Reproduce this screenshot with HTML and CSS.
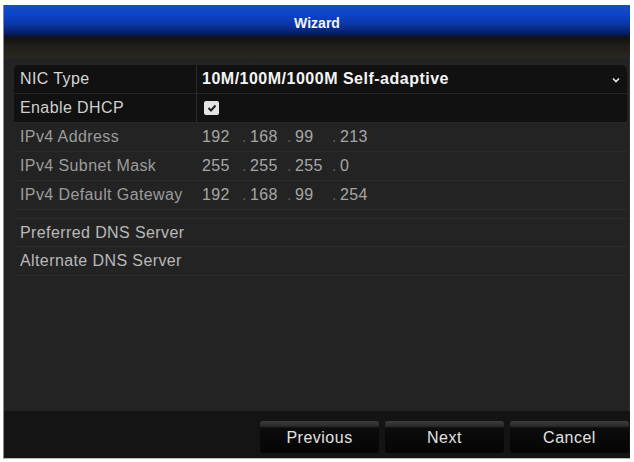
FILE: index.html
```html
<!DOCTYPE html>
<html lang="en">
<head>
  <meta charset="UTF-8"/>
  <title>Wizard</title>
  <link rel="stylesheet" href="styles.css">
</head>
<body>
  <div class="wizard">
    <div class="title">Wizard</div>
    <div class="band"></div>

    <div class="content">
      <div class="row row-select">
        <div class="label">NIC Type</div>
        <div class="value nic">10M/100M/1000M Self-adaptive</div>
        <svg class="arrow" width="8" height="6" viewBox="0 0 8 6">
          <path d="M1 1.5 L4 4.5 L7 1.5" fill="none" stroke="#e8e8e8" stroke-width="1.6"/>
        </svg>
      </div>
      <div class="row row-dark">
        <div class="label bright">Enable DHCP</div>
        <div class="value">
          <span class="check">
            <svg width="10" height="10" viewBox="0 0 10 10">
              <path d="M1.5 5 L4 7.5 L8.5 2.5" fill="none" stroke="#222" stroke-width="2"/>
            </svg>
          </span>
        </div>
      </div>
      <div class="row">
        <div class="label dim">IPv4 Address</div>
        <div class="value ip">
          <span class="oct">192</span><span class="oct"><i>.</i>168</span><span class="oct"><i>.</i>99</span><span class="oct"><i>.</i>213</span>
        </div>
      </div>
      <div class="row">
        <div class="label dim">IPv4 Subnet Mask</div>
        <div class="value ip">
          <span class="oct">255</span><span class="oct"><i>.</i>255</span><span class="oct"><i>.</i>255</span><span class="oct"><i>.</i>0</span>
        </div>
      </div>
      <div class="row">
        <div class="label dim">IPv4 Default Gateway</div>
        <div class="value ip">
          <span class="oct">192</span><span class="oct"><i>.</i>168</span><span class="oct"><i>.</i>99</span><span class="oct"><i>.</i>254</span>
        </div>
      </div>

      <div class="row dns first">
        <div class="label">Preferred DNS Server</div>
        <div class="value"></div>
      </div>
      <div class="row dns">
        <div class="label">Alternate DNS Server</div>
        <div class="value"></div>
      </div>
    </div>

    <div class="footer">
      <button class="btn">Previous</button>
      <button class="btn">Next</button>
      <button class="btn">Cancel</button>
    </div>
  </div>
</body>
</html>
```

FILE: styles.css
```css
html, body {
  margin: 0; padding: 0;
  background: #fff;
  font-family: "Liberation Sans", Arial, sans-serif;
}
.wizard {
  margin: 5px 4px 0 3px;
  height: 454px;
  display: flex; flex-direction: column;
  background: #1a1a1a;
  border-left: 1px solid #8a8a8a;
  border-bottom: 1px solid #b8b8b8;
  box-sizing: border-box;
}
.title {
  flex: 0 0 32px;
  display: flex; align-items: center; justify-content: center;
  background: linear-gradient(#1a4cb8 0%, #0b44cc 30%, #0a37a8 60%, #061c62 90%, #05123a 100%);
  color: #f2f4f8;
  font-size: 14px; font-weight: bold;
  padding-top: 4px; box-sizing: border-box;
}
.band {
  flex: 0 0 21px;
  background: linear-gradient(#121110, #221f1b 50%, #2b2722);
}
.content {
  flex: 1 1 auto;
  background: #232323;
  padding: 7px 2px 0 10px;
  border-right: 1px solid #303030;
}
.row {
  height: 29px;
  display: flex; align-items: center;
  border-bottom: 1px solid #2c2c2c;
  box-sizing: border-box;
  font-size: 16px; letter-spacing: 0.4px;
  position: relative;
}
.row-select, .row-dark {
  background: #111;
  border-bottom: 1px solid #262626;
}
.row-select {
  border-radius: 5px 6px 0 0;
}
.row .label {
  width: 183px; height: 100%;
  padding-left: 6px;
  box-sizing: border-box;
  display: flex; align-items: center;
  color: #d6d6d6;
  border-right: 1px solid #2a2a2a;
  white-space: nowrap;
}
.row .label.bright { color: #cfcfcf; }
.row .label.dim { color: #9c9c9c; border-right: none; }
.row .value {
  flex: 1;
  padding-left: 5px;
  display: flex; align-items: center;
}
.row .value.nic {
  color: #f4f4f4; font-weight: bold; letter-spacing: 0.5px;
}
.arrow {
  position: absolute; right: 7px; top: 12px;
}
.check {
  width: 15px; height: 14px;
  margin-left: 2px;
  background: #e4e4e4; border-radius: 2px;
  display: flex; align-items: center; justify-content: center;
}
.ip { color: #a6a6a6; padding-left: 0 !important; }
.oct {
  width: 45px;
  display: inline-block;
  white-space: nowrap;
}
.oct:first-child { padding-left: 5px; width: 40px; }
.oct i {
  font-style: normal; color: #5e5e5e;
  display: inline-block; width: 8px;
}
.dns .label { color: #b9b9b9; border-right: none; }
.row.dns.first {
  margin-top: 8px;
  border-top: 1px solid #2c2c2c;
}
.footer {
  flex: 0 0 47px;
  background: #141414;
  display: flex; justify-content: flex-end; align-items: flex-start;
  gap: 6px;
  padding: 10px 1px 0 0;
  box-sizing: border-box;
}
.btn {
  width: 119px; height: 32px;
  border: none; border-radius: 3px;
  background: linear-gradient(#3e3e3e 0%, #2a2a2a 16%, #0c0c0c 22%, #050505 100%);
  color: #e2e2e2;
  font-family: "Liberation Sans", Arial, sans-serif;
  font-size: 16px; letter-spacing: 0.5px;
  padding-top: 3px;
  cursor: pointer;
}
```
